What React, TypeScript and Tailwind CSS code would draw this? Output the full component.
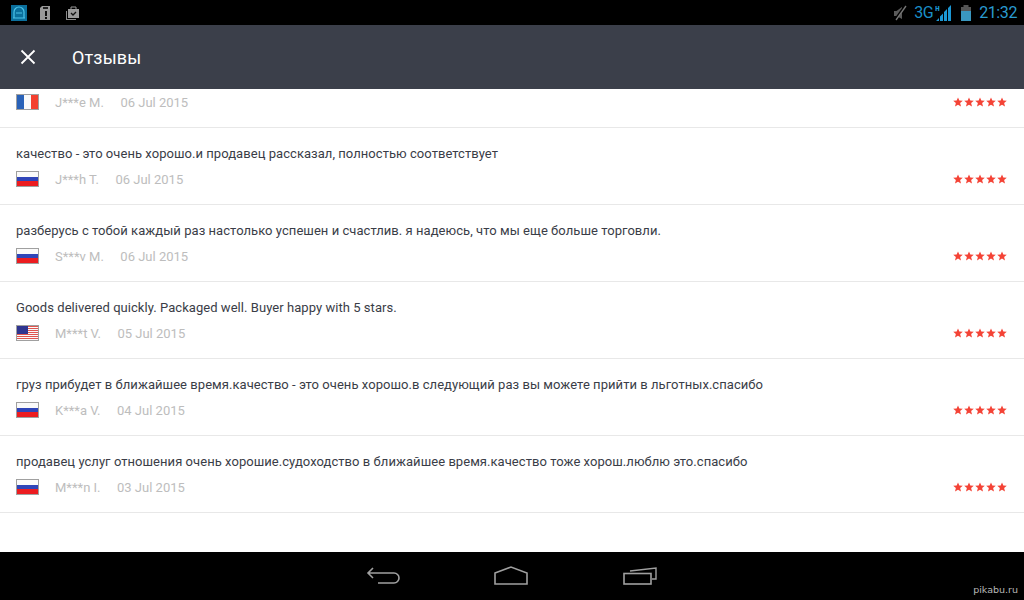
import React from "react";

const Flag = ({ c }: { c: "fr" | "ru" | "us" }) => (
  <svg width="23" height="16" viewBox="0 0 23 16" className="shrink-0 block">
    <rect x="0" y="0" width="23" height="16" fill="#a0a0a0" />
    {c === "fr" && (
      <g>
        <rect x="1" y="1" width="7" height="14" fill="#2a62b8" />
        <rect x="8" y="1" width="7" height="14" fill="#fafafa" />
        <rect x="15" y="1" width="7" height="14" fill="#f4402f" />
      </g>
    )}
    {c === "ru" && (
      <g>
        <rect x="1" y="1" width="21" height="5" fill="#fafafa" />
        <rect x="1" y="6" width="21" height="4" fill="#2f45b8" />
        <rect x="1" y="10" width="21" height="5" fill="#ec1c20" />
      </g>
    )}
    {c === "us" && (
      <g>
        <rect x="1" y="1" width="21" height="14" fill="#fafafa" />
        {[1, 3, 5, 7, 9, 11, 13].map((y) => (
          <rect key={y} x="1" y={y} width="21" height="1" fill="#e0554f" />
        ))}
        <rect x="1" y="1" width="11" height="8" fill="#2f3590" />
      </g>
    )}
  </svg>
);

const Stars = () => (
  <div className="flex gap-[1px] ml-auto mr-[17px] mb-[2px]">
    {[0, 1, 2, 3, 4].map((i) => (
      <svg key={i} width="10" height="10" viewBox="0 0 24 24" className="block">
        <path d="M12 1l3.2 7.6 8.3.6-6.4 5.300 2.100 8.200L12 18.300 4.800 22.700l2.100-8.200L.5 9.200l8.300-.6z" fill="#f44336" />
      </svg>
    ))}
  </div>
);

type R = { text?: string; flag: "fr" | "ru" | "us"; name: string; date: string };

const rows: R[] = [
  { flag: "fr", name: "J***e M.", date: "06 Jul 2015" },
  { text: "качество - это очень хорошо.и продавец рассказал, полностью соответствует", flag: "ru", name: "J***h T.", date: "06 Jul 2015" },
  { text: "разберусь с тобой каждый раз настолько успешен и счастлив. я надеюсь, что мы еще больше торговли.", flag: "ru", name: "S***v M.", date: "06 Jul 2015" },
  { text: "Goods delivered quickly. Packaged well. Buyer happy with 5 stars.", flag: "us", name: "M***t V.", date: "05 Jul 2015" },
  { text: "груз прибудет в ближайшее время.качество - это очень хорошо.в следующий раз вы можете прийти в льготных.спасибо", flag: "ru", name: "K***a V.", date: "04 Jul 2015" },
  { text: "продавец услуг отношения очень хорошие.судоходство в ближайшее время.качество тоже хорош.люблю это.спасибо", flag: "ru", name: "M***n I.", date: "03 Jul 2015" },
];

const Row = ({ r }: { r: R }) => (
  <div className={`border-b border-[#e8e8e8] pl-4 pb-[14px] ${r.text ? "pt-[16px]" : "pt-[4px]"}`}>
    {r.text && (
      <div className="h-[20px] mb-[6px] text-[13px] leading-[20px] tracking-[0.05px] text-[#3a3d47] whitespace-nowrap">{r.text}</div>
    )}
    <div className="flex items-center h-[20px] text-[13px] text-[#bdbdbd]">
      <div className="-translate-y-px">
        <Flag c={r.flag} />
      </div>
      <span className="ml-4 whitespace-nowrap">{r.name}</span>
      <span className="ml-[16.500px] whitespace-nowrap">{r.date}</span>
      <Stars />
    </div>
  </div>
);

export default function App() {
  return (
    <div className="w-[1024px] h-[600px] flex flex-col overflow-hidden bg-white font-['Roboto',sans-serif]">
      <div className="h-[25px] bg-black flex items-center pl-[11px] pr-[7px] shrink-0">
        <svg width="16" height="16" viewBox="0 0 16 16" className="block">
          <rect width="16" height="16" fill="#0b6f9c" />
          <path d="M3 13V7a5 5 0 0 1 10 0v6M2 13h12M5 8h6" stroke="#4cc3e8" strokeWidth="1.2" fill="none" />
        </svg>
        <svg width="11" height="16" viewBox="0 0 11 16" className="block ml-[13px]">
          <path d="M2 1h8v14H0V3z" fill="#9a9a9a" />
          <rect x="3" y="2" width="5" height="2" fill="#222" />
          <rect x="5" y="6" width="2" height="5" fill="#111" />
          <rect x="5" y="12" width="2" height="2" fill="#111" />
        </svg>
        <svg width="16" height="16" viewBox="0 0 16 16" className="block ml-[14px]">
          <path d="M1 6h1v8h9v1H1z" fill="#8a8a8a" />
          <path d="M3 4h11v9H3z" fill="#9a9a9a" />
          <path d="M6 4V2h5v2" stroke="#9a9a9a" fill="none" />
          <path d="M6 8l2 2 3-3" stroke="#111" strokeWidth="1.300" fill="none" />
        </svg>
        <div className="ml-auto flex items-center">
          <svg width="14" height="16" viewBox="0 0 14 16" className="block mr-[7px]">
            <path d="M1 6h2.500L9 2v12L3.500 11H1z" fill="#5a5a5a" />
            <path d="M2 15L12 1" stroke="#000" strokeWidth="2.500" />
            <path d="M3 15L13 1" stroke="#777" strokeWidth="1.300" />
          </svg>
          <span className="text-[16px] leading-none tracking-[-0.5px] text-[#1b8fc7]">3G</span>
          <svg width="17" height="17" viewBox="0 0 17 17" className="block ml-[2px]">
            <path d="M1 17l3-3v3zM5 17v-4.500l3-3V17zM9 17V8l3-3v12zM13 17V4l3-3v16z" fill="#1b97d4" />
            <text x="0" y="7" fontSize="8" fontWeight="700" fontFamily="Liberation Mono" fill="#1b97d4">H</text>
          </svg>
          <svg width="10" height="16" viewBox="0 0 10 16" className="block ml-[9px]">
            <rect x="2.500" y="0" width="5" height="2" fill="#555" />
            <rect x="0" y="2" width="10" height="14" fill="#555" />
            <rect x="0" y="6" width="10" height="10" fill="#3a97bf" />
          </svg>
          <span className="ml-[8px] text-[16px] leading-none tracking-[-0.4px] text-[#2a9bd0]">21:32</span>
        </div>
      </div>

      <div className="h-[64px] bg-[#3b3f4a] flex items-center pl-5 shrink-0">
        <svg width="16" height="16" viewBox="0 0 16 16" className="block">
          <path d="M1.500 1.500l13 13M14.500 1.500l-13 13" stroke="#fff" strokeWidth="1.800" />
        </svg>
        <span className="ml-9 text-[18px] tracking-[0.15px] text-white">Отзывы</span>
      </div>

      <div className="flex-1 min-h-0 bg-white">
        {rows.map((r) => (
          <Row key={r.name + r.date} r={r} />
        ))}
      </div>

      <div className="h-[48px] bg-black flex items-center justify-center gap-[93px] relative shrink-0">
        <svg width="34" height="20" viewBox="0 0 34 20" className="block">
          <path d="M7 2L2 7l5 5M2 7h26a5 5 0 0 1 5 5v0a5 5 0 0 1-5 5H12" stroke="#a0a0a0" strokeWidth="1.600" fill="none" />
        </svg>
        <svg width="36" height="20" viewBox="0 0 36 20" className="block">
          <path d="M2 7L18 1l16 6v11H2z" stroke="#a0a0a0" strokeWidth="1.600" fill="none" />
        </svg>
        <svg width="36" height="20" viewBox="0 0 36 20" className="block">
          <rect x="2" y="7.500" width="27" height="10.500" stroke="#a0a0a0" strokeWidth="1.600" fill="none" />
          <path d="M8 5L34 2v11h-4" stroke="#a0a0a0" strokeWidth="1.400" fill="none" />
        </svg>
        <span className="absolute right-[6px] bottom-[6px] text-[9.500px] leading-none text-[#b8b8b8] font-['DejaVu_Sans',sans-serif]">pikabu.ru</span>
      </div>
    </div>
  );
}
